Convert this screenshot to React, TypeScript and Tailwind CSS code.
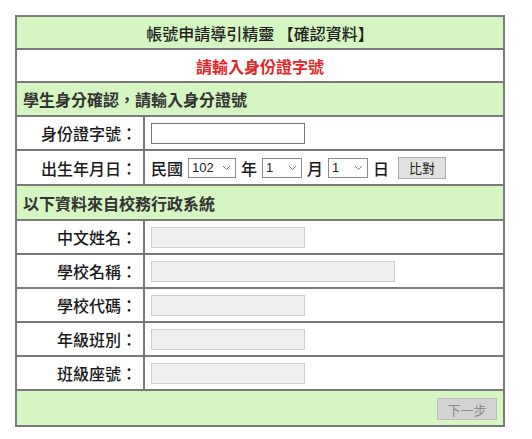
import React from 'react';

const FONT = "font-['Noto_Sans_CJK_TC','Noto_Sans',sans-serif]";

const cell = 'border-2 border-[#7a7a7a]';

const LabelCell: React.FC<{ children: React.ReactNode }> = ({ children }) => (
  <td className={`${cell} w-[128px] pr-[6px] text-right text-[16px] font-medium text-[#1a1a1a]`}>{children}</td>
);

const ReadonlyRow: React.FC<{ label: string; wide?: boolean }> = ({ label, wide }) => (
  <tr className="h-[34px]">
    <LabelCell>{label}：</LabelCell>
    <td className={`${cell} pl-[6px]`}>
      <input
        disabled
        className={`${wide ? 'w-[244px]' : 'w-[154px]'} block h-[21px] border border-[#cfcfcf] bg-[#efefef]`}
      />
    </td>
  </tr>
);

const Select: React.FC<{ value: string; width: string }> = ({ value, width }) => (
  <span
    className={`${width} inline-flex h-[20px] items-center justify-between border border-[#8a8a8a] bg-white pl-[3px] pr-[4px] text-[13px] text-[#222] font-['Liberation_Sans',sans-serif]`}
  >
    <span>{value}</span>
    <svg width="9" height="6" viewBox="0 0 9 6" fill="none" stroke="#777" strokeWidth="1">
      <path d="M1 1l3.5 3.5L8 1" />
    </svg>
  </span>
);

export default function App() {
  return (
    <div className={`min-h-[439px] bg-white pl-[15px] pt-[15px] ${FONT}`}>
      <table className="w-[490px] border-collapse border-2 border-[#6a6a6a]">
        <tbody>
          <tr className="h-[33px] bg-[#d5f6c0]">
            <td colSpan={2} className={`${cell} text-center text-[16px] font-medium text-[#222]`}>
              帳號申請導引精靈 【確認資料】
            </td>
          </tr>
          <tr className="h-[33px] bg-white">
            <td colSpan={2} className={`${cell} text-center text-[16px] font-bold text-[#e3262a]`}>
              請輸入身份證字號
            </td>
          </tr>
          <tr className="h-[34px] bg-[#d5f6c0]">
            <td colSpan={2} className={`${cell} pl-[6px] text-[16px] font-bold text-[#333]`}>
              學生身分確認，請輸入身分證號
            </td>
          </tr>
          <tr className="h-[34px]">
            <LabelCell>身份證字號：</LabelCell>
            <td className={`${cell} pl-[6px]`}>
              <input className="block h-[21px] w-[154px] border border-[#767676] bg-white" />
            </td>
          </tr>
          <tr className="h-[35px]">
            <LabelCell>出生年月日：</LabelCell>
            <td className={`${cell} pl-[6px]`}>
              <div className="flex items-center gap-[5px] text-[16px] font-medium text-[#1a1a1a]">
                <span>民國</span>
                <Select value="102" width="w-[48px]" />
                <span>年</span>
                <Select value="1" width="w-[40px]" />
                <span>月</span>
                <Select value="1" width="w-[40px]" />
                <span>日</span>
                <button className="ml-[4px] h-[22px] w-[48px] border border-[#adadad] bg-[#e1e1e1] text-[13px] font-normal text-[#222]">
                  比對
                </button>
              </div>
            </td>
          </tr>
          <tr className="h-[35px] bg-[#d5f6c0]">
            <td colSpan={2} className={`${cell} pl-[6px] text-[16px] font-bold text-[#333]`}>
              以下資料來自校務行政系統
            </td>
          </tr>
          <ReadonlyRow label="中文姓名" />
          <ReadonlyRow label="學校名稱" wide />
          <ReadonlyRow label="學校代碼" />
          <ReadonlyRow label="年級班別" />
          <ReadonlyRow label="班級座號" />
          <tr className="h-[36px] bg-[#d5f6c0]">
            <td colSpan={2} className={`${cell} pr-[6px] text-right`}>
              <button
                disabled
                className="h-[22px] w-[60px] border border-[#bdbdbd] bg-[#d3d3d3] text-[13px] text-[#8a8a8a]"
              >
                下一步
              </button>
            </td>
          </tr>
        </tbody>
      </table>
    </div>
  );
}
